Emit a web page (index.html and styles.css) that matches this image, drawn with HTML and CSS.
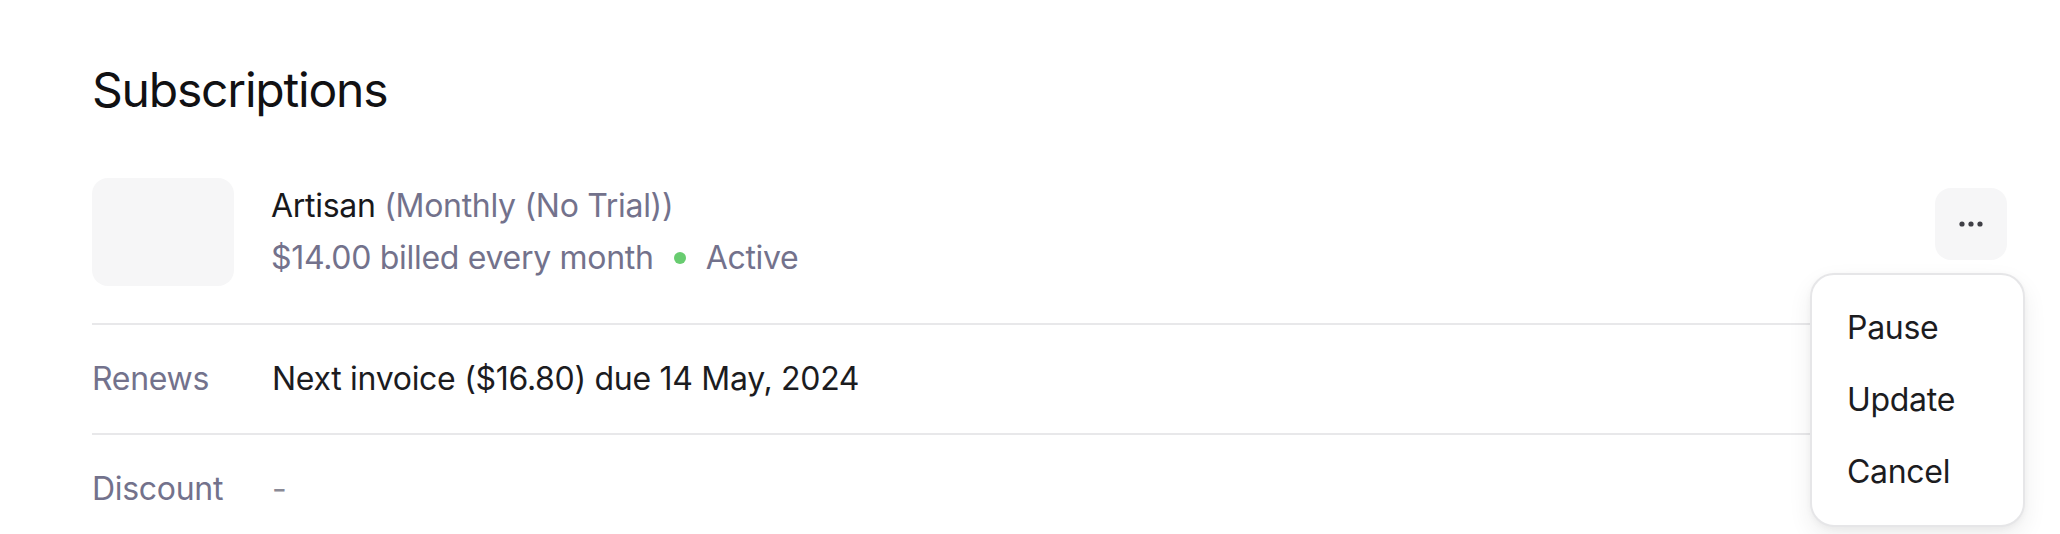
FILE: index.html
```html
<!DOCTYPE html>
<html>
<head>
<title>Subscriptions</title>
<meta name="viewport" content="width=device-width, initial-scale=1">
<link rel="stylesheet" href="styles.css">
</head>
<body>

<main class="page">
  <h2 class="title">Subscriptions</h2>

  <div class="sub">
    <div class="sub-head">
      <div class="thumb"></div>
      <div class="sub-info">
        <div class="sub-name">Artisan <span class="muted">(Monthly (No Trial))</span></div>
        <div class="sub-meta">
          <span>$14.00 billed every month</span>
          <span class="dot"></span>
          <span>Active</span>
        </div>
      </div>
      <div class="actions">
        <button class="more" aria-label="More">
          <svg width="26" height="6" viewBox="0 0 26 6">
            <circle cx="4" cy="3" r="2.6" fill="#3f3f46"/>
            <circle cx="13" cy="3" r="2.6" fill="#3f3f46"/>
            <circle cx="22" cy="3" r="2.6" fill="#3f3f46"/>
          </svg>
        </button>
        <div class="menu">
          <a class="menu-item">Pause</a>
          <a class="menu-item">Update</a>
          <a class="menu-item">Cancel</a>
        </div>
      </div>
    </div>

    <div class="detail">
      <span class="label">Renews</span>
      <span class="value">Next invoice ($16.80) due 14 May, 2024</span>
    </div>
    <div class="detail">
      <span class="label">Discount</span>
      <span class="value dim">-</span>
    </div>
  </div>
</main>

</body>
</html>
```

FILE: styles.css
```css
body {
  margin: 0;
  font-family: Inter, "Noto Sans", sans-serif;
  letter-spacing: -0.3px;
  color: #18181b;
  background: #fff;
}

.page {
  padding: 58px 53px 0 92px;
}

.title {
  margin: 0 0 56px;
  font-size: 48px;
  line-height: 64px;
  font-weight: 400;
  letter-spacing: -0.025em;
  color: #111113;
}

.sub-head {
  display: flex;
  align-items: center;
  gap: 37px;
  padding-bottom: 37px;
  border-bottom: 2px solid #e8e8ea;
}

.thumb {
  width: 142px;
  height: 108px;
  border-radius: 16px;
  background-color: #f6f6f7;
  flex-shrink: 0;
}

.sub-info {
  font-size: 32px;
  line-height: 48px;
}

.sub-name {
  color: #18181b;
}

.muted {
  color: #73728c;
}

.sub-meta {
  display: flex;
  align-items: center;
  gap: 20px;
  margin-top: 4px;
  color: #73728c;
}

.dot {
  width: 12px;
  height: 12px;
  border-radius: 50%;
  background-color: #68cc70;
}

.actions {
  position: relative;
  margin-left: auto;
  align-self: flex-start;
  margin-top: 10px;
}

.more {
  width: 72px;
  height: 72px;
  border: none;
  border-radius: 16px;
  background-color: #f6f6f7;
  display: flex;
  align-items: center;
  justify-content: center;
  padding: 0;
  cursor: pointer;
}

.menu {
  position: absolute;
  top: 85px;
  right: -18px;
  width: 215px;
  box-sizing: border-box;
  padding: 17px 0;
  background: #fff;
  border: 2px solid #e6e6e8;
  border-radius: 24px;
  box-shadow: 0 10px 24px rgba(0, 0, 0, 0.07), 0 2px 6px rgba(0, 0, 0, 0.04);
  z-index: 2;
}

.menu-item {
  display: block;
  padding: 12px 35px;
  font-size: 32px;
  line-height: 48px;
  color: #1c1c1f;
  cursor: pointer;
}

.detail {
  display: flex;
  padding: 30px 0;
  border-bottom: 2px solid #e8e8ea;
  font-size: 32px;
  line-height: 48px;
}

.label {
  width: 180px;
  flex-shrink: 0;
  color: #73728c;
}

.value {
  color: #1c1c1f;
}

.value.dim {
  color: #8a8a96;
}
```
